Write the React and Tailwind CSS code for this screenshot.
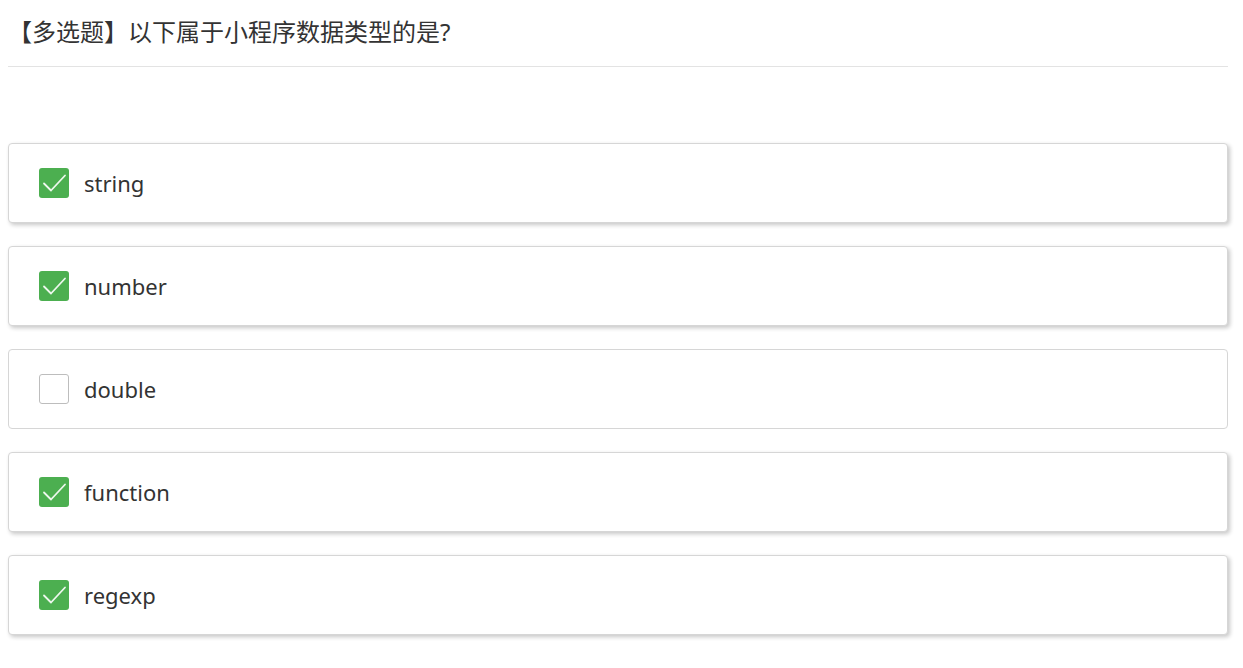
import React from 'react';

const options = [
  { label: 'string', checked: true },
  { label: 'number', checked: true },
  { label: 'double', checked: false },
  { label: 'function', checked: true },
  { label: 'regexp', checked: true },
];

const Box = ({ checked }) =>
  checked ? (
    <span className="flex items-center justify-center w-[30px] h-[30px] rounded-[3px] bg-[#4caf50]">
      <svg width="30" height="30" viewBox="0 0 30 30" fill="none">
        <path d="M5 15.5l7 7L26 7.5" stroke="#eef7ee" strokeWidth="1.8" strokeLinecap="round" strokeLinejoin="round" />
      </svg>
    </span>
  ) : (
    <span className="block w-[30px] h-[30px] rounded-[3px] border border-[#bdbdbd] bg-white" />
  );

const App = () => {
  return (
    <div className="min-h-screen bg-white pl-2 pr-[15px] text-[#333]" style={{ fontFamily: '"Noto Sans", "Noto Sans CJK SC", sans-serif' }}>
      <div className="pt-[17px] pb-[19px] border-b border-[#e3e3e3]">
        <h1 className="text-[24px] leading-[30px] font-normal text-[#333]">【多选题】以下属于小程序数据类型的是?</h1>
      </div>

      <ul className="mt-[76px] flex flex-col gap-[23px]">
        {options.map((o) => (
          <li
            key={o.label}
            className={`flex items-center h-[80px] pl-[30px] rounded-[4px] border border-[#d6d6d6] bg-white ${
              o.checked ? 'shadow-[2px_2px_4px_rgba(0,0,0,0.22)]' : ''
            }`}
          >
            <Box checked={o.checked} />
            <span className="ml-[15px] text-[22px] leading-[30px] text-[#333]">{o.label}</span>
          </li>
        ))}
      </ul>
    </div>
  );
};

export default App;
